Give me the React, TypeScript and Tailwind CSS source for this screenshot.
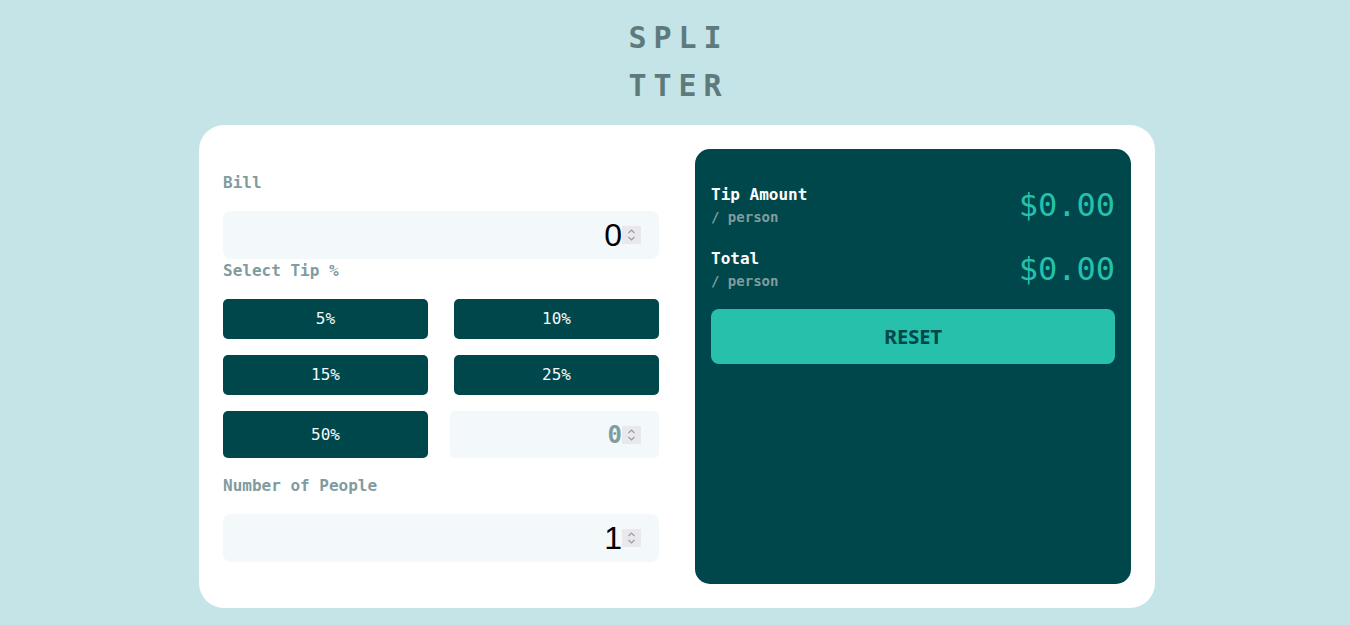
const mono = "font-['DejaVu_Sans_Mono','Liberation_Mono',monospace]";

const tips = ['5%', '10%', '15%', '25%', '50%'];

const Label = ({ children, className = '' }: { children: string; className?: string }) => (
    <p className={`h-6 text-[16px] leading-6 font-bold text-[#7f9c9f] ${mono} ${className}`}>{children}</p>
);

// stand-in for the browser's number spinner
const Spinner = () => (
    <span className="w-[19px] h-[18px] bg-[#e9e8ec] flex items-center justify-center shrink-0">
        <svg width="9" height="14" viewBox="0 0 9 14" fill="none" stroke="#9c9aa2" strokeWidth="1.2">
            <path d="M1.5 5 L4.5 2 L7.5 5" />
            <path d="M1.5 9 L4.5 12 L7.5 9" />
        </svg>
    </span>
);

const NumberField = ({ value, className, inputClass }: { value: number; className: string; inputClass: string }) => (
    <div className={`flex items-center bg-[#f3f9fa] pr-[18px] ${className}`}>
        <input
            type="text"
            inputMode="decimal"
            defaultValue={value}
            className={`flex-1 min-w-0 h-full bg-transparent text-right outline-none ${inputClass}`}
        />
        <Spinner />
    </div>
);

const ResultRow = ({ title }: { title: string }) => (
    <div className="flex items-center justify-between">
        <div className={mono}>
            <p className="text-[16px] leading-6 font-bold text-white">{title}</p>
            <p className="text-[14px] leading-5 font-bold text-[#7f9c9f]">/ person</p>
        </div>
        <p className={`text-[32px] leading-10 text-[#26c0ab] ${mono}`}>$0.00</p>
    </div>
);

const App = () => {
    return (
        <div className="min-h-[625px] bg-[#c5e4e7] flex flex-col items-center pt-[14px]">
            <h1
                className={`w-[124px] break-all text-center text-[30px] leading-[48px] font-bold tracking-[7px] pl-[7px] text-[#5e7a7d] ${mono}`}
            >
                SPLITTER
            </h1>
            <main className="mt-[15px] ml-1 w-[956px] h-[483px] bg-white rounded-[25px] p-6 grid grid-cols-2 gap-9">
                <section className="pt-[22px] flex flex-col">
                    <Label className="mb-4">Bill</Label>
                    <NumberField
                        value={0}
                        className="h-12 rounded-lg"
                        inputClass="text-[32px] text-black font-['Liberation_Sans',Arial,sans-serif]"
                    />
                    <Label className="mb-4">Select Tip %</Label>
                    <div className="grid grid-cols-2 gap-x-[26px] gap-y-4">
                        {tips.map((t, i) => (
                            <button
                                key={t}
                                className={`${i === 4 ? 'h-[47px]' : 'h-10'} rounded-[5px] bg-[#00474b] text-[#f3f9fa] text-[16px] ${mono}`}
                            >
                                {t}
                            </button>
                        ))}
                        <NumberField
                            value={0}
                            className="h-[47px] w-[209px] justify-self-end rounded-[5px]"
                            inputClass={`text-[24px] font-bold text-[#7f9c9f] ${mono}`}
                        />
                    </div>
                    <Label className="mt-4 mb-4">Number of People</Label>
                    <NumberField
                        value={1}
                        className="h-12 rounded-lg"
                        inputClass="text-[32px] text-black font-['Liberation_Sans',Arial,sans-serif]"
                    />
                </section>
                <section className="bg-[#00474b] rounded-[15px] px-4 pt-[34px] flex flex-col">
                    <div className="flex flex-col gap-5">
                        <ResultRow title="Tip Amount" />
                        <ResultRow title="Total" />
                    </div>
                    <button className="mt-[18px] h-[55px] rounded-lg bg-[#26c0ab] text-[#00474b] text-[20px] font-bold font-['Noto_Sans','DejaVu_Sans',sans-serif]">
                        RESET
                    </button>
                </section>
            </main>
        </div>
    );
};

export default App;
